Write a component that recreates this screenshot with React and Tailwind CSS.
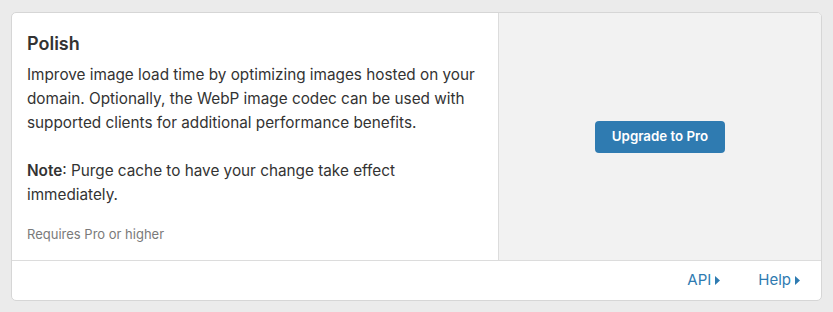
export default function App() {
  return (
    <div
      className="min-h-screen bg-[#ebebeb] px-[11px] pt-[12px] pb-[12px]"
      style={{ fontFamily: "Inter, 'Noto Sans', sans-serif" }}
    >
      <div className="bg-white border border-[#d6d6d6] rounded-[5px] overflow-hidden">
        <div className="flex">
          <div className="w-[487px] shrink-0 border-r border-[#dcdcdc] px-[15px] pt-[19px] pb-[16px]">
            <h3 className="text-[18px] leading-[24px] font-semibold text-[#333] mb-[7px]">Polish</h3>
            <p className="text-[15.3px] leading-[24px] text-[#333]">
              Improve image load time by optimizing images hosted on your domain. Optionally, the WebP image codec can be used with supported clients for additional performance benefits.
            </p>
            <p className="text-[15.3px] leading-[24px] text-[#333] mt-[24px]">
              <strong className="font-semibold">Note</strong>: Purge cache to have your change take effect immediately.
            </p>
            <p className="text-[13px] leading-[20px] text-[#7a7a7a] mt-[17px]">Requires Pro or higher</p>
          </div>
          <div className="flex-1 bg-[#f2f2f2] flex items-center justify-center">
            <button className="h-[32px] px-[17px] rounded-[4px] bg-[#2f7bb1] text-white text-[13.3px] font-semibold">
              Upgrade to Pro
            </button>
          </div>
        </div>
        <div className="border-t border-[#dcdcdc] h-[40px] flex items-center justify-end gap-[38px] pr-[21px] text-[15px] text-[#2f7bb1]">
          <a className="flex items-center gap-[4px]">
            API
            <svg width="5" height="9" viewBox="0 0 5 9" fill="currentColor"><path d="M0 0 L5 4.5 L0 9 Z" /></svg>
          </a>
          <a className="flex items-center gap-[4px]">
            Help
            <svg width="5" height="9" viewBox="0 0 5 9" fill="currentColor"><path d="M0 0 L5 4.5 L0 9 Z" /></svg>
          </a>
        </div>
      </div>
    </div>
  );
}
